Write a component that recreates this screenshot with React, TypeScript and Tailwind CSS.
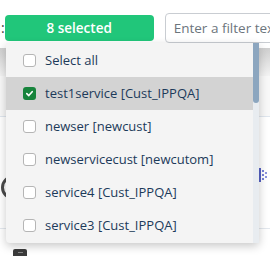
import React from 'react';

const ITEMS = [
  { label: 'Select all', checked: false },
  { label: 'test1service [Cust_IPPQA]', checked: true },
  { label: 'newser [newcust]', checked: false },
  { label: 'newservicecust [newcutom]', checked: false },
  { label: 'service4 [Cust_IPPQA]', checked: false },
  { label: 'service3 [Cust_IPPQA]', checked: false },
];

const CheckBox: React.FC<{ checked: boolean }> = ({ checked }) =>
  checked ? (
    <span className="flex h-[13px] w-[13px] shrink-0 items-center justify-center rounded-[3px] bg-[#17843c]">
      <svg width="9" height="9" viewBox="0 0 10 10">
        <path d="M2 5.2 L4.2 7.3 L8 3" fill="none" stroke="#fff" strokeWidth="1.8" strokeLinecap="round" strokeLinejoin="round" />
      </svg>
    </span>
  ) : (
    <span className="h-[13px] w-[13px] shrink-0 rounded-[3px] border border-[#b5b5b5] bg-white" />
  );

export default function App() {
  return (
    <div className="relative h-[256px] w-[270px] overflow-hidden bg-white font-['Open_Sans',sans-serif]">
      {/* page behind the dropdown */}
      <div className="flex items-start pt-[13px]">
        <span className="w-[9px] pl-[1px] pt-[5px] text-[14px] leading-[20px] text-[#444]">:</span>
        <button className="mt-[2px] flex h-[26px] w-[149px] shrink-0 items-center justify-center rounded-[4px] bg-[#21c67a] text-[13.5px] font-semibold text-white">
          8 selected
        </button>
        <div className="ml-[11px] flex h-[30px] w-[140px] shrink-0 items-center rounded-[4px] border border-[#c9cdd2] pl-[8px] text-[13.5px] whitespace-nowrap text-[#6c757d]">
          Enter a filter text
        </div>
      </div>
      <div className="mt-[5px] h-[28px] bg-gradient-to-b from-[#cfcfcf] to-[#f3f3f3]" />
      <div className="h-[40px] bg-[#f8f8f8]" />
      <div className="h-[112px] border-t border-[#dfe6ee]">
        <div className="flex justify-between">
          <div className="ml-[1px] mt-[58px] h-[25px] w-[25px] rounded-full border-[3px] border-[#4a4a4a]" />
          <svg className="mt-[51px]" width="11" height="14" viewBox="0 0 11 14">
            <rect x="0" y="0" width="2" height="14" fill="#5561c4" />
            <rect x="3" y="2" width="2" height="2" fill="#7680d8" />
            <rect x="3" y="6" width="2" height="2" fill="#7680d8" />
            <rect x="3" y="10" width="2" height="2" fill="#7680d8" />
            <rect x="6" y="4" width="2" height="2" fill="#8d95df" />
            <rect x="6" y="8" width="2" height="2" fill="#8d95df" />
          </svg>
        </div>
      </div>
      <div className="border-t border-[#e3e8ee] pl-[13px] pt-[20px]">
        <div className="flex h-[14px] w-[14px] items-start justify-center rounded-[2px] bg-[#3b3b3b]">
          <span className="mt-[3px] h-[1px] w-[5px] bg-[#888]" />
        </div>
      </div>

      {/* dropdown menu */}
      <div className="absolute left-[6px] top-[43px] flex h-[200px] w-[253px] rounded-b-[4px] bg-[#f4f4f4] shadow-[0_3px_10px_rgba(0,0,0,0.22)]">
        <div className="flex-1 pt-[1px]">
          {ITEMS.map((item) => (
            <div
              key={item.label}
              className={`flex h-[33px] items-center gap-[9px] pl-[17px] text-[13px] whitespace-nowrap text-[#1c3a5a] ${
                item.checked ? 'bg-[#d3d3d3]' : ''
              }`}
            >
              <CheckBox checked={item.checked} />
              <span>{item.label}</span>
            </div>
          ))}
        </div>
        <div className="w-[6px] bg-[#e8ecf0]">
          <div className="h-[60px] rounded-b-[3px] bg-[#8ca6bf]" />
        </div>
      </div>
    </div>
  );
}
